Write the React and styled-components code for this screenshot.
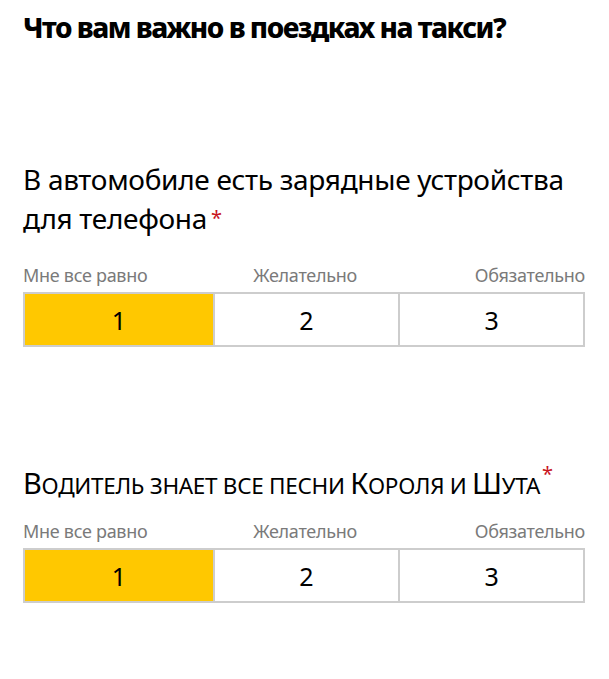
import React, { useState } from "react";
import styled, { createGlobalStyle } from "styled-components";

const Global = createGlobalStyle`
  body {
    margin: 0;
    background: #fff;
    font-family: "Noto Sans", "Open Sans", sans-serif;
    color: #000;
  }
`;

const Page = styled.div`
  padding: 8px 24px 40px 23px;
`;

const Title = styled.h1`
  margin: 0;
  font-size: 28px;
  font-weight: 800;
  line-height: 38px;
  letter-spacing: -1.5px;
`;

const Question = styled.div`
  margin-top: ${(p) => p.$top}px;
`;

const QuestionText = styled.div`
  font-size: 28px;
  line-height: 39px;
  letter-spacing: -0.3px;
`;

// hand-made small caps: capitals full size, the rest upper-cased and smaller
const Caps = styled.span`
  font-size: 29px;
`;

const Small = styled.span`
  font-size: 22.5px;
  text-transform: uppercase;
`;

const Star = styled.sup`
  color: #c8141e;
  font-size: 20px;
  line-height: 0;
  margin-left: ${(p) => (p.$caps ? "2px" : "4px")};
  vertical-align: ${(p) => (p.$caps ? "13px" : "4px")};
`;

const Labels = styled.div`
  display: flex;
  justify-content: space-between;
  margin-top: ${(p) => p.$top}px;
  font-size: 18px;
  line-height: 24px;
  color: #7a7a7a;
  letter-spacing: -0.3px;
`;

const Mid = styled.span`
  margin-right: 12px;
`;

const Scale = styled.div`
  display: grid;
  grid-template-columns: 189fr 187fr 186fr;
  width: 562px;
  height: 55px;
  margin-top: 5px;
  border: 2px solid #cdcdcd;
  box-sizing: border-box;
`;

const Cell = styled.button`
  border: none;
  border-left: ${(p) => (p.$first ? "none" : "2px solid #cdcdcd")};
  background: ${(p) => (p.$active ? "#ffc800" : "#fff")};
  font-family: inherit;
  font-size: 25px;
  color: #000;
  padding: 0;
  cursor: pointer;
`;

const RatingRow = ({ value, onChange }) => (
  <Scale>
    {[1, 2, 3].map((n, i) => (
      <Cell key={n} $first={i === 0} $active={value === n} onClick={() => onChange(n)}>
        {n}
      </Cell>
    ))}
  </Scale>
);

const ScaleLabels = ({ top }) => (
  <Labels $top={top}>
    <span>Мне все равно</span>
    <Mid>Желательно</Mid>
    <span>Обязательно</span>
  </Labels>
);

export default function App() {
  const [a, setA] = useState(1);
  const [b, setB] = useState(1);
  return (
    <Page>
      <Global />
      <Title>Что вам важно в поездках на такси?</Title>

      <Question $top={114}>
        <QuestionText>
          В автомобиле есть зарядные устройства для телефона
          <Star>*</Star>
        </QuestionText>
        <ScaleLabels top={25} />
        <RatingRow value={a} onChange={setA} />
      </Question>

      <Question $top={116}>
        <QuestionText>
          <Caps>В</Caps>
          <Small>одитель знает все песни </Small>
          <Caps>К</Caps>
          <Small>ороля и </Small>
          <Caps>Ш</Caps>
          <Small>ута</Small>
          <Star $caps>*</Star>
        </QuestionText>
        <ScaleLabels top={14} />
        <RatingRow value={b} onChange={setB} />
      </Question>
    </Page>
  );
}
